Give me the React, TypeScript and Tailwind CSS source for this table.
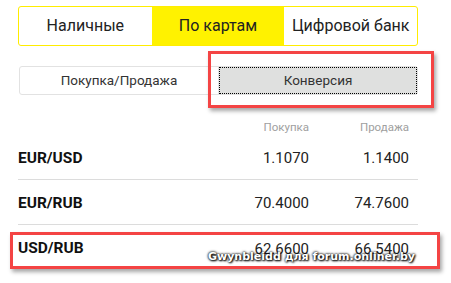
import React from "react";

export default function App() {
  const rows = [
    { pair: "EUR/USD", buy: "1.1070", sell: "1.1400" },
    { pair: "EUR/RUB", buy: "70.4000", sell: "74.7600" },
    { pair: "USD/RUB", buy: "62.6600", sell: "66.5400" },
  ];
  return (
    <div
      className="relative w-[451px] h-[283px] bg-white overflow-hidden text-[#222]"
      style={{ fontFamily: "Roboto, 'Noto Sans', sans-serif" }}
    >
      <div className="ml-[18px] w-[400px] pt-[6px]">
        <div className="flex h-[40px] border border-[#ffed00] rounded-[3px] overflow-hidden text-[16px]">
          <div className="flex-1 flex items-center justify-center">Наличные</div>
          <div className="flex-1 flex items-center justify-center bg-[#fff200]">По картам</div>
          <div className="flex-1 flex items-center justify-center">Цифровой банк</div>
        </div>
        <div className="mt-[20px] ml-[1px] flex h-[29px] border border-[#e2e2e2] rounded-[3px] text-[13.5px] text-[#333]">
          <div className="w-[199px] flex items-center justify-center border-r border-[#e2e2e2]">
            Покупка/Продажа
          </div>
          <div className="flex-1 flex items-center justify-center bg-[#dfe0df] border border-dotted border-black">
            Конверсия
          </div>
        </div>
        <div className="h-[40px] flex items-center pt-[24px] pr-[9px] text-[11.5px] text-[#a0a0a0] leading-[14px]">
          <div className="flex-1" />
          <div className="w-[100px] text-right">Покупка</div>
          <div className="w-[100px] text-right">Продажа</div>
        </div>
        {rows.map((r, i) => (
          <div
            key={r.pair}
            className={`h-[45px] flex items-center pt-[3px] pr-[9px] text-[15px] ${
              i < rows.length - 1 ? "border-b border-[#dcdcdc]" : ""
            }`}
          >
            <div className="flex-1 font-bold text-[15.5px] text-[#111]">{r.pair}</div>
            <div className="w-[100px] text-right">{r.buy}</div>
            <div className="w-[100px] text-right">{r.sell}</div>
          </div>
        ))}
      </div>

      <div className="absolute left-[208px] top-[51px] w-[226px] h-[57px] border-[3px] border-[#f44444] shadow-[2px_3px_4px_rgba(0,0,0,0.35)]" />
      <div className="absolute left-[10px] top-[232px] w-[430px] h-[37px] border-[3px] border-[#f44444] shadow-[2px_3px_4px_rgba(0,0,0,0.35)]" />
      <div
        className="absolute left-[208px] top-[250px] text-[11px] font-bold text-white leading-[14px] whitespace-nowrap"
        style={{
          fontFamily: "'DejaVu Sans', sans-serif",
          textShadow: "0 0 2px #000, 1px 1px 2px #000, 0 0 3px rgba(0,0,0,0.8)",
        }}
      >
        Gwynbleidd для forum.onliner.by
      </div>
    </div>
  );
}
